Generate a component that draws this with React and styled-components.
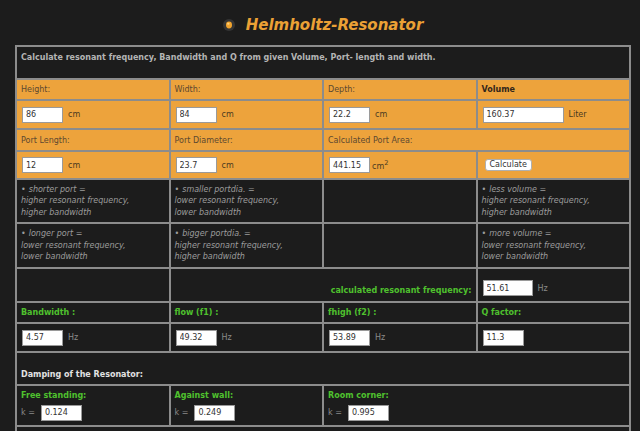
import React from 'react';
import styled, { createGlobalStyle } from 'styled-components';

const GlobalStyle = createGlobalStyle`
  html, body {
    margin: 0;
    padding: 0;
    background: #1c1c1c;
  }
  body {
    font-family: "DejaVu Sans", Verdana, sans-serif;
    font-size: 8px;
  }
`;

const Page = styled.div`
  padding: 0 9px 0 15px;
`;

const Header = styled.h1`
  margin: 0;
  height: 45px;
  box-sizing: border-box;
  padding-top: 5px;
  display: flex;
  align-items: center;
  justify-content: center;
  gap: 11px;
  font-size: 15px;
  font-style: italic;
  font-weight: bold;
  color: #eba135;
`;

const Grid = styled.table`
  width: 616px;
  table-layout: fixed;
  border-collapse: separate;
  border-spacing: 0;
  border: 1px solid #8c8c8c;
`;

const Row = styled.tr`
  height: ${p => p.$h}px;
`;

const Cell = styled.td`
  border: 1px solid #8c8c8c;
  padding: ${p => p.$pad || '0 4px'};
  background: ${p => (p.$orange ? '#eda33c' : 'transparent')};
  color: ${p => (p.$orange ? '#5c4830' : '#b8b8b8')};
  vertical-align: ${p => p.$valign || 'middle'};
  text-align: ${p => (p.$right ? 'right' : 'left')};
  white-space: nowrap;
`;

const Caption = styled.div`
  font-weight: bold;
  color: #b4b4b4;
`;

const Strong = styled.span`
  font-weight: bold;
  color: #33261a;
`;

const Green = styled.div`
  font-weight: bold;
  color: #4fc12e;
`;

const White = styled.div`
  font-weight: bold;
  color: #e2e2e2;
`;

const Field = styled.input`
  box-sizing: border-box;
  width: ${p => p.$w || 41}px;
  height: 16px;
  margin: 0 0 0 1px;
  padding: 0 3px;
  border: 1px solid #9a9a9a;
  background: #fff;
  color: #333;
  font-family: "DejaVu Sans", Verdana, sans-serif;
  font-size: 8px;
  vertical-align: middle;
`;

const Unit = styled.span`
  margin-left: ${p => (p.$tight ? 2 : 5)}px;
  color: ${p => (p.$dim ? '#8a8a8a' : '#4a3a20')};
  vertical-align: middle;
`;

const Button = styled.button`
  height: 12px;
  padding: 0 4px;
  margin-left: 3px;
  border: 1px solid #b0b0b0;
  border-radius: 3px;
  background: #fff;
  color: #333;
  font-family: "DejaVu Sans", Verdana, sans-serif;
  font-size: 8px;
  line-height: 10px;
`;

const Hint = styled.div`
  font-style: italic;
  color: #9c9c9c;
  line-height: 11.5px;
`;

const Dot = styled.span`
  font-style: normal;
  margin-right: 3px;
`;

const KRow = styled.div`
  margin-top: 5px;
  color: #8a8a8a;
  display: flex;
  align-items: center;
  gap: 5px;
`;

function Bullet() {
  return (
    <svg width="12" height="12" viewBox="0 0 12 12">
      <circle cx="6" cy="6" r="6" fill="#353535" />
      <ellipse cx="6" cy="6" rx="3" ry="3.4" fill="#f2a42e" />
      <ellipse cx="5.3" cy="4.8" rx="1.2" ry="1" fill="#ffd27a" />
    </svg>
  );
}

function Input({ value, w }) {
  return <Field readOnly value={value} $w={w} />;
}

function HintCell({ lines }) {
  return (
    <Cell>
      <Hint>
        <Dot>•</Dot>{lines[0]}<br />{lines[1]}<br />{lines[2]}
      </Hint>
    </Cell>
  );
}

export default function App() {
  return (
    <Page>
      <GlobalStyle />
      <Header>
        <Bullet />
        Helmholtz-Resonator
      </Header>
      <Grid>
        <colgroup>
          <col /><col /><col /><col />
        </colgroup>
        <tbody>
          <Row $h={33}>
            <Cell colSpan={4} $valign="top" $pad="6px 4px 0">
              <Caption>Calculate resonant frequency, Bandwidth and Q from given Volume, Port- length and width.</Caption>
            </Cell>
          </Row>
          <Row $h={21}>
            <Cell $orange>Height:</Cell>
            <Cell $orange>Width:</Cell>
            <Cell $orange>Depth:</Cell>
            <Cell $orange><Strong>Volume</Strong></Cell>
          </Row>
          <Row $h={29}>
            <Cell $orange><Input value="86" /><Unit>cm</Unit></Cell>
            <Cell $orange><Input value="84" /><Unit>cm</Unit></Cell>
            <Cell $orange><Input value="22.2" /><Unit>cm</Unit></Cell>
            <Cell $orange><Input value="160.37" w={81} /><Unit>Liter</Unit></Cell>
          </Row>
          <Row $h={22}>
            <Cell $orange>Port Length:</Cell>
            <Cell $orange>Port Diameter:</Cell>
            <Cell $orange colSpan={2}>Calculated Port Area:</Cell>
          </Row>
          <Row $h={28}>
            <Cell $orange><Input value="12" /><Unit>cm</Unit></Cell>
            <Cell $orange><Input value="23.7" /><Unit>cm</Unit></Cell>
            <Cell $orange><Input value="441.15" /><Unit $tight>cm<sup>2</sup></Unit></Cell>
            <Cell $orange><Button>Calculate</Button></Cell>
          </Row>
          <Row $h={44}>
            <HintCell lines={['shorter port =', 'higher resonant frequency,', 'higher bandwidth']} />
            <HintCell lines={['smaller portdia. =', 'lower resonant frequency,', 'lower bandwidth']} />
            <Cell />
            <HintCell lines={['less volume =', 'higher resonant frequency,', 'higher bandwidth']} />
          </Row>
          <Row $h={45}>
            <HintCell lines={['longer port =', 'lower resonant frequency,', 'lower bandwidth']} />
            <HintCell lines={['bigger portdia. =', 'higher resonant frequency,', 'higher bandwidth']} />
            <Cell />
            <HintCell lines={['more volume =', 'lower resonant frequency,', 'lower bandwidth']} />
          </Row>
          <Row $h={34}>
            <Cell />
            <Cell colSpan={2} $right $valign="bottom" $pad="0 4px 6px">
              <Green>calculated resonant frequency:</Green>
            </Cell>
            <Cell $valign="bottom" $pad="0 4px 5px">
              <Input value="51.61" w={50} /><Unit $dim>Hz</Unit>
            </Cell>
          </Row>
          <Row $h={21}>
            <Cell><Green>Bandwidth :</Green></Cell>
            <Cell><Green>flow (f1) :</Green></Cell>
            <Cell><Green>fhigh (f2) :</Green></Cell>
            <Cell><Green>Q factor:</Green></Cell>
          </Row>
          <Row $h={29}>
            <Cell><Input value="4.57" /><Unit $dim>Hz</Unit></Cell>
            <Cell><Input value="49.32" /><Unit $dim>Hz</Unit></Cell>
            <Cell><Input value="53.89" /><Unit $dim>Hz</Unit></Cell>
            <Cell><Input value="11.3" /></Cell>
          </Row>
          <Row $h={33}>
            <Cell colSpan={4} $valign="bottom" $pad="0 4px 5px">
              <White>Damping of the Resonator:</White>
            </Cell>
          </Row>
          <Row $h={41}>
            <Cell>
              <Green>Free standing:</Green>
              <KRow>k = <Input value="0.124" /></KRow>
            </Cell>
            <Cell>
              <Green>Against wall:</Green>
              <KRow>k = <Input value="0.249" /></KRow>
            </Cell>
            <Cell colSpan={2}>
              <Green>Room corner:</Green>
              <KRow>k = <Input value="0.995" /></KRow>
            </Cell>
          </Row>
          <Row $h={30}>
            <Cell colSpan={4} />
          </Row>
        </tbody>
      </Grid>
    </Page>
  );
}
